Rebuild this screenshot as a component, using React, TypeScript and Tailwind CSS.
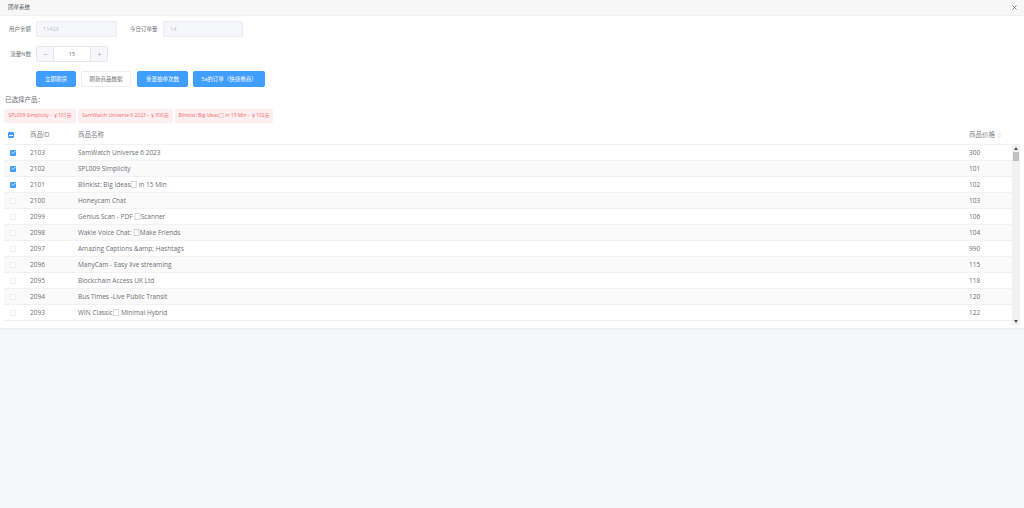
import { X, Minus, Plus, Check, ChevronsUpDown } from "lucide-react";

const rows = [
  { id: "2103", name: "SamWatch Universe 6 2023", price: "300", on: true },
  { id: "2102", name: "SPL009 Simplicity", price: "101", on: true },
  { id: "2101", name: "Blinkist: Big Ideas□ in 15 Min", price: "102", on: true },
  { id: "2100", name: "Honeycam Chat", price: "103", on: false },
  { id: "2099", name: "Genius Scan - PDF □Scanner", price: "106", on: false },
  { id: "2098", name: "Wakie Voice Chat: □Make Friends", price: "104", on: false },
  { id: "2097", name: "Amazing Captions &amp; Hashtags", price: "990", on: false },
  { id: "2096", name: "ManyCam - Easy live streaming", price: "115", on: false },
  { id: "2095", name: "Blockchain Access UK Ltd", price: "118", on: false },
  { id: "2094", name: "Bus Times -Live Public Transit", price: "120", on: false },
  { id: "2093", name: "WIN Classic□ Minimal Hybrid", price: "122", on: false },
];

const tags = [
  { text: "SPL009 Simplicity - ￥101元", w: "w-[72px]" },
  { text: "SamWatch Universe 6 2023 - ￥300元", w: "w-[95px]" },
  { text: "Blinkist: Big Ideas□ in 15 Min - ￥102元", w: "w-[98px]" },
];

function Row({ r, i }: { r: (typeof rows)[number]; i: number }) {
  return (
    <div className={`flex h-4 shrink-0 items-center border-b border-[#f1f2f5] text-[6.5px] text-[#6d7075] ${i % 2 === 1 ? "bg-[#fafafa]" : "bg-white"}`}>
      <div className="flex w-[26px] pl-[6px]">
        {r.on ? (
          <span className="flex h-[6px] w-[6px] items-center justify-center rounded-[1px] bg-[#409eff]">
            <Check className="h-[5px] w-[5px] text-white" strokeWidth={4} />
          </span>
        ) : (
          <span className="h-[6px] w-[6px] rounded-[1px] border border-[#eceef2] bg-white" />
        )}
      </div>
      <div className="w-[48px]">{r.id}</div>
      <div className="flex-1">{r.name}</div>
      <div className="w-[43px]">{r.price}</div>
    </div>
  );
}

export default function App() {
  return (
    <div className="flex h-[508px] w-[1024px] flex-col overflow-hidden bg-[#f5f7fa] font-['Open_Sans','Noto_Sans_CJK_SC',sans-serif] text-[#6d7075]">
      <div className="flex h-[328px] flex-col bg-white shadow-[0_1px_2px_rgba(0,0,0,0.05)]">
        <div className="flex h-4 items-center justify-between border-b border-[#f0f1f4] bg-[#f7f7f7] pl-2 pr-[6px] text-[5.5px] text-[#55585c]">
          <span>团单系统</span>
          <X className="h-[7px] w-[7px] text-[#404348]" strokeWidth={2} />
        </div>

        <div className="mt-[5px] flex h-4 items-center text-[5.5px]">
          <span className="w-[31px] whitespace-nowrap text-right">用户余额</span>
          <span className="ml-[5px] flex h-4 w-[81px] items-center rounded-[2px] border border-[#eceef2] bg-[#f5f7fa] pl-[6px] text-[#c0c4cc]">11423</span>
          <span className="ml-[13px] w-[33px] whitespace-nowrap">今日订单量</span>
          <span className="flex h-4 w-[80px] items-center rounded-[2px] border border-[#eceef2] bg-[#f5f7fa] pl-[6px] text-[#c0c4cc]">14</span>
        </div>

        <div className="mt-[9px] flex h-4 items-center text-[5.5px]">
          <span className="w-[31px] whitespace-nowrap text-right">流量N数</span>
          <div className="ml-[5px] flex h-4 w-[72px] items-center rounded-[2px] border border-[#e4e7ed]">
            <span className="flex h-full w-[17px] items-center justify-center border-r border-[#e4e7ed] bg-[#f5f7fa]">
              <Minus className="h-[5px] w-[5px] text-[#909399]" />
            </span>
            <span className="flex-1 text-center">15</span>
            <span className="flex h-full w-[17px] items-center justify-center border-l border-[#e4e7ed] bg-[#f5f7fa]">
              <Plus className="h-[5px] w-[5px] text-[#909399]" />
            </span>
          </div>
        </div>

        <div className="ml-[36px] mt-[9px] flex h-4 items-stretch text-[5.5px]">
          <button className="w-[40px] rounded-[2px] bg-[#409eff] text-white">立即刷货</button>
          <button className="ml-[5px] w-[50px] rounded-[2px] border border-[#eceef2] bg-white text-[#6d7075]">刷新商品数据</button>
          <button className="ml-[6px] w-[51px] rounded-[2px] bg-[#409eff] text-white">重置抽单次数</button>
          <button className="ml-[5px] w-[72px] rounded-[2px] bg-[#409eff] text-white">5a的订单（快捷券商）</button>
        </div>

        <div className="ml-[5px] mt-[8px] text-[6.5px] leading-[9px]">已选择产品：</div>

        <div className="ml-[4px] mt-[5px] flex h-[14px] gap-[2px] text-[5px] text-[#f56c6c]">
          {tags.map((t) => (
            <span key={t.text} className={`${t.w} flex items-center justify-center whitespace-nowrap rounded-[2px] bg-[#fef0f0]`}>
              {t.text}
            </span>
          ))}
        </div>

        <div className="mx-[4px] mt-[3px] flex h-[19px] shrink-0 items-center border-b border-[#f1f2f5] text-[6.5px] text-[#7f8287]">
          <div className="flex w-[26px] pl-[4px]">
            <span className="flex h-[6px] w-[6px] items-center justify-center rounded-[1px] bg-[#409eff]">
              <span className="h-[1px] w-[4px] bg-white" />
            </span>
          </div>
          <div className="w-[48px]">商品ID</div>
          <div className="flex-1">商品名称</div>
          <div className="flex w-[51px] items-center gap-[2px]">
            商品价格
            <ChevronsUpDown className="h-[5px] w-[5px] text-[#b0b4bc]" />
          </div>
        </div>

        <div className="mx-[4px] flex h-[180px] overflow-hidden">
          <div className="flex flex-1 flex-col overflow-hidden">
            {rows.map((r, i) => (
              <Row key={r.id} r={r} i={i} />
            ))}
          </div>
          <div className="flex w-[8px] flex-col items-center bg-[#f1f1f1]">
            <span className="mt-[2px] h-0 w-0 border-x-[2px] border-b-[3px] border-x-transparent border-b-[#505050]" />
            <span className="mt-[2px] h-[9px] w-[6px] bg-[#c1c1c1]" />
            <span className="mb-[2px] mt-auto h-0 w-0 border-x-[2px] border-t-[3px] border-x-transparent border-t-[#505050]" />
          </div>
        </div>
      </div>
    </div>
  );
}
